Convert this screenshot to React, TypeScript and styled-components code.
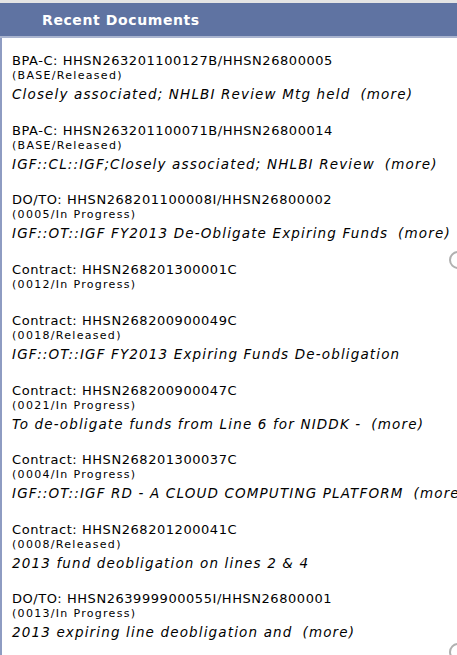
import React from 'react';
import styled, { createGlobalStyle } from 'styled-components';

interface DocItem {
  title: string;
  status: string;
  note?: string;
  more?: boolean;
}

const docs: DocItem[] = [
  { title: 'BPA-C: HHSN263201100127B/HHSN26800005', status: '(BASE/Released)', note: 'Closely associated; NHLBI Review Mtg held', more: true },
  { title: 'BPA-C: HHSN263201100071B/HHSN26800014', status: '(BASE/Released)', note: 'IGF::CL::IGF;Closely associated; NHLBI Review', more: true },
  { title: 'DO/TO: HHSN268201100008I/HHSN26800002', status: '(0005/In Progress)', note: 'IGF::OT::IGF FY2013 De-Obligate Expiring Funds', more: true },
  { title: 'Contract: HHSN268201300001C', status: '(0012/In Progress)' },
  { title: 'Contract: HHSN268200900049C', status: '(0018/Released)', note: 'IGF::OT::IGF FY2013 Expiring Funds De-obligation' },
  { title: 'Contract: HHSN268200900047C', status: '(0021/In Progress)', note: 'To de-obligate funds from Line 6 for NIDDK -', more: true },
  { title: 'Contract: HHSN268201300037C', status: '(0004/In Progress)', note: 'IGF::OT::IGF RD - A CLOUD COMPUTING PLATFORM', more: true },
  { title: 'Contract: HHSN268201200041C', status: '(0008/Released)', note: '2013 fund deobligation on lines 2 & 4' },
  { title: 'DO/TO: HHSN263999900055I/HHSN26800001', status: '(0013/In Progress)', note: '2013 expiring line deobligation and', more: true },
];

const GlobalStyle = createGlobalStyle`
  html, body {
    margin: 0;
    padding: 0;
    background: #ffffff;
  }
  body {
    font-family: Verdana, "DejaVu Sans", sans-serif;
    color: #000;
  }
`;

const Panel = styled.section`
  width: 457px;
  height: 655px;
  overflow: hidden;
  position: relative;
  border-top: 3px solid #e4e4e4;
  box-sizing: border-box;
`;

const Header = styled.h2`
  margin: 0;
  height: 35px;
  box-sizing: border-box;
  background: #5f73a2;
  border-bottom: 2px solid #a9b4cf;
  color: #ffffff;
  font-size: 14px;
  letter-spacing: 0.6px;
  font-weight: bold;
  padding: 0 0 0 42px;
  display: flex;
  align-items: center;
`;

const List = styled.div`
  border-left: 2px solid #8e9cc2;
  padding: 15px 0 0 10px;
  display: flex;
  flex-direction: column;
  gap: 20.5px;
  height: 100%;
`;

const Item = styled.div`
  display: flex;
  flex-direction: column;
  white-space: nowrap;
`;

const Title = styled.div`
  font-size: 13px;
  line-height: 16px;
  letter-spacing: 0.55px;
`;

const Status = styled.div`
  font-size: 11px;
  line-height: 14px;
  letter-spacing: 1.3px;
  margin-bottom: 1px;
`;

const Note = styled.div`
  font-size: 13.5px;
  line-height: 16px;
  letter-spacing: 1.15px;
  font-style: italic;
  margin-top: 2px;
`;

const More = styled.span`
  margin-left: 10px;
`;

const Knob = styled.div<{ $top: number }>`
  position: absolute;
  right: -10px;
  top: ${({ $top }) => $top}px;
  width: 14px;
  height: 14px;
  border-radius: 50%;
  border: 2px solid #b0b0b0;
`;

const App: React.FC = () => {
  return (
    <>
      <GlobalStyle />
      <Panel>
        <Header>Recent Documents</Header>
        <List>
          {docs.map((d) => (
            <Item key={d.title}>
              <Title>{d.title}</Title>
              <Status>{d.status}</Status>
              {d.note && (
                <Note>
                  {d.note}
                  {d.more && <More>(more)</More>}
                </Note>
              )}
            </Item>
          ))}
        </List>
        <Knob $top={248} />
        <Knob $top={640} />
      </Panel>
    </>
  );
};

export default App;
